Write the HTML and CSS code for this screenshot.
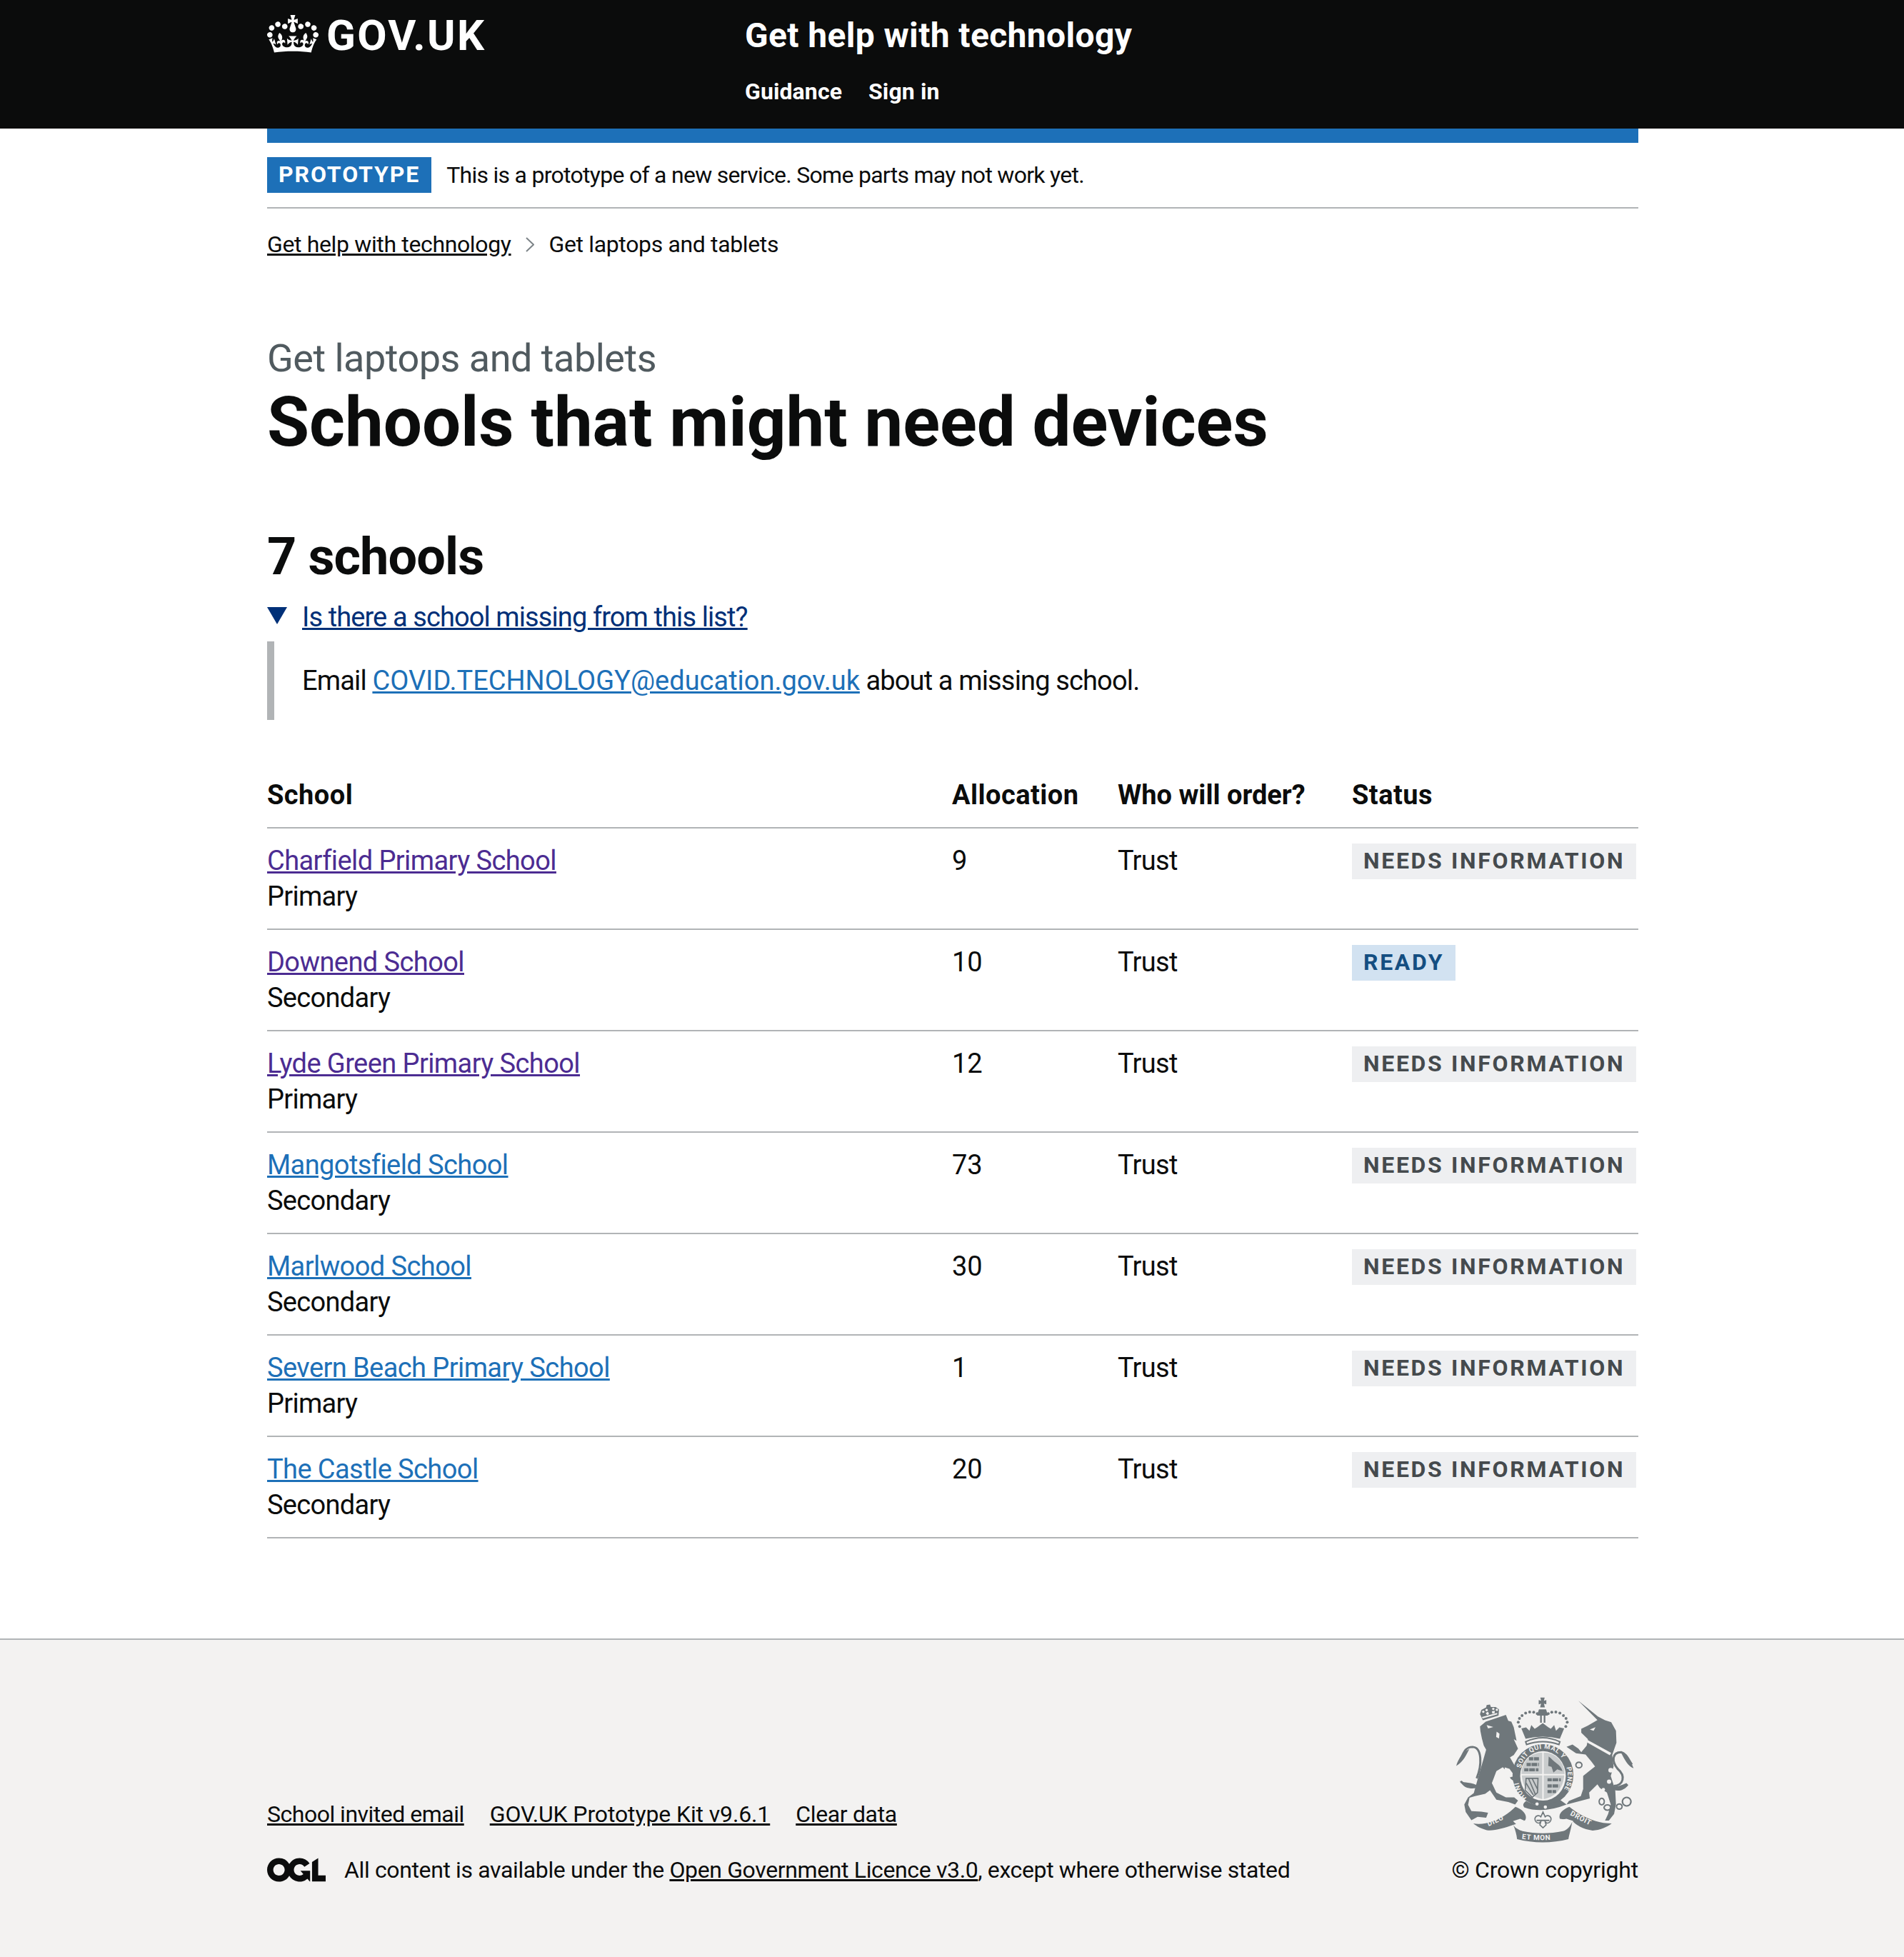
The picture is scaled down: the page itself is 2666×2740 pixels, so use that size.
FILE: index.html
```html
<!DOCTYPE html>
<html lang="en">
<head>
<meta charset="utf-8">
<title>Schools that might need devices</title>
<link rel="stylesheet" href="styles.css">
</head>
<body>
<header class="site-header">
  <div class="wrap header-inner">
    <a class="logo" href="#">
      <svg class="crown" viewBox="0 0 132 97" width="72" height="53"><path fill="currentColor" fill-rule="evenodd" d="M25 30.2c3.5 1.5 7.7-.2 9.1-3.7 1.5-3.6-.2-7.8-3.9-9.2-3.6-1.4-7.6.3-9.1 3.9-1.4 3.5.3 7.5 3.9 9zM9 39.5c3.6 1.5 7.8-.2 9.2-3.7 1.5-3.6-.2-7.8-3.9-9.1-3.6-1.5-7.6.2-9.1 3.8-1.4 3.5.3 7.5 3.8 9zM4.4 57.2c3.5 1.5 7.7-.2 9.1-3.8 1.5-3.6-.2-7.7-3.9-9.1-3.5-1.5-7.6.3-9.1 3.8-1.4 3.5.3 7.6 3.9 9.1zm38.3-21.4c3.5 1.5 7.7-.2 9.1-3.8 1.5-3.6-.2-7.7-3.9-9.1-3.6-1.5-7.6.3-9.1 3.8-1.3 3.6.4 7.7 3.9 9.1zm64.4-5.6c-3.6 1.5-7.8-.2-9.1-3.7-1.5-3.6.2-7.8 3.8-9.2 3.6-1.4 7.7.3 9.2 3.9 1.3 3.5-.4 7.5-3.9 9zm15.9 9.3c-3.6 1.5-7.7-.2-9.1-3.7-1.5-3.6.2-7.8 3.7-9.1 3.6-1.5 7.7.2 9.2 3.8 1.5 3.5-.3 7.5-3.8 9zm4.7 17.7c-3.6 1.5-7.8-.2-9.2-3.8-1.5-3.6.2-7.7 3.9-9.1 3.6-1.5 7.7.3 9.2 3.8 1.3 3.5-.4 7.6-3.9 9.1zM89.3 35.8c-3.6 1.5-7.8-.2-9.2-3.8-1.4-3.6.2-7.7 3.9-9.1 3.6-1.5 7.7.3 9.2 3.8 1.4 3.6-.3 7.7-3.9 9.1zM69.7 17.7l8.9 4.7V9.3l-8.9 2.8c-.2-.3-.5-.6-.9-.9L72.4 0H59.6l3.5 11.2c-.3.3-.6.5-.9.9l-8.8-2.8v13.1l8.8-4.7c.3.3.6.7.9.9l-5 15.4v.1c-.2.8-.4 1.6-.4 2.4 0 4.1 3.1 7.5 7 8.1h.2c.3 0 .7.1 1 .1.4 0 .7 0 1-.1h.2c4-.6 7.1-4.1 7.1-8.1 0-.8-.1-1.7-.4-2.4V34l-5.1-15.4c.4-.2.7-.6 1-.9zM66 92.8c16.9 0 32.8 1.1 47.1 3.2 4-16.9 8.9-26.7 14-33.5l-9.6-3.4c1 4.9 1.1 7.2 0 10.2-1.5-1.4-3-4.3-4.2-8.7L108.6 76c2.8-2 5-3.2 7.5-3.3-4.4 9.4-10 11.9-13.6 11.2-4.3-.8-6.3-4.6-5.6-7.9 1-4.7 5.7-5.9 8-.5 4.3-8.7-3-11.4-7.6-8.8 7.1-7.2 7.9-13.5 2.1-21.1-8 6.1-8.1 12.3-4.5 20.8-4.7-5.4-12.1-2.5-9.5 6.2 3.4-5.2 7.9-2 7.2 3.1-.6 4.3-6.4 7.8-13.5 7.2-10.3-.9-10.9-8-11.2-13.8 2.5-.5 7.1 1.8 11 7.3L80.2 60c-4.1 4.4-8 5.3-12.3 5.4 1.4-4.4 8-11.6 8-11.6H55.5s6.4 7.2 7.9 11.6c-4.2-.1-8-1-12.3-5.4l1.4 16.4c3.9-5.5 8.5-7.7 10.9-7.3-.3 5.8-.9 12.8-11.1 13.8-7.2.6-12.9-2.9-13.5-7.2-.7-5 3.8-8.3 7.1-3.1 2.7-8.7-4.6-11.6-9.4-6.2 3.7-8.5 3.6-14.7-4.6-20.8-5.8 7.6-5 13.9 2.2 21.1-4.7-2.6-11.9.1-7.7 8.8 2.3-5.5 7.1-4.2 8.1.5.7 3.3-1.3 7.1-5.7 7.9-3.5.7-9-1.8-13.5-11.2 2.5.1 4.7 1.3 7.5 3.3l-4.7-15.4c-1.2 4.4-2.7 7.2-4.3 8.7-1.1-3-.9-5.3 0-10.2l-9.5 3.4c5 6.9 9.9 16.7 14 33.5 14.8-2.1 30.8-3.2 47.7-3.2z"/></svg>
      <span class="logo-text">GOV.UK</span>
    </a>
    <div class="service">
      <a class="service-name" href="#">Get help with technology</a>
      <nav class="service-nav"><a href="#">Guidance</a><a href="#">Sign in</a></nav>
    </div>
  </div>
</header>
<div class="wrap">
  <div class="blue-bar"></div>
  <div class="phase">
    <strong class="phase-tag">Prototype</strong>
    <span class="phase-text">This is a prototype of a new service. Some parts may not work yet.</span>
  </div>
  <nav class="crumbs">
    <a href="#">Get help with technology</a>
    <svg class="crumb-sep" viewBox="0 0 12 21" width="12" height="21"><path d="M1 1l10 9.5L1 20" fill="none" stroke="#7d8488" stroke-width="2"/></svg>
    <span>Get laptops and tablets</span>
  </nav>
  <main class="main">
    <span class="caption">Get laptops and tablets</span>
    <h1 class="title">Schools that might need devices</h1>
    <h2 class="count">7 schools</h2>
    <div class="details">
      <div class="summary">
        <svg class="tri" viewBox="0 0 28 24" width="28" height="24"><path d="M0 0h28L14 24z" fill="#003078"/></svg>
        <a href="#">Is there a school missing from this list?</a>
      </div>
      <div class="details-body">Email <a class="link" href="#">COVID.TECHNOLOGY@education.gov.uk</a> about a missing school.</div>
    </div>
    <table class="schools">
      <thead>
        <tr><th class="c-school">School</th><th class="c-alloc">Allocation</th><th class="c-who">Who will order?</th><th class="c-status">Status</th></tr>
      </thead>
      <tbody>
        <tr><td><a class="visited" href="#">Charfield Primary School</a><br>Primary</td><td class="num">9</td><td>Trust</td><td><strong class="tag tag-grey">Needs information</strong></td></tr>
        <tr><td><a class="visited" href="#">Downend School</a><br>Secondary</td><td class="num">10</td><td>Trust</td><td><strong class="tag tag-blue">Ready</strong></td></tr>
        <tr><td><a class="visited" href="#">Lyde Green Primary School</a><br>Primary</td><td class="num">12</td><td>Trust</td><td><strong class="tag tag-grey">Needs information</strong></td></tr>
        <tr><td><a class="link" href="#">Mangotsfield School</a><br>Secondary</td><td class="num">73</td><td>Trust</td><td><strong class="tag tag-grey">Needs information</strong></td></tr>
        <tr><td><a class="link" href="#">Marlwood School</a><br>Secondary</td><td class="num">30</td><td>Trust</td><td><strong class="tag tag-grey">Needs information</strong></td></tr>
        <tr><td><a class="link" href="#">Severn Beach Primary School</a><br>Primary</td><td class="num">1</td><td>Trust</td><td><strong class="tag tag-grey">Needs information</strong></td></tr>
        <tr><td><a class="link" href="#">The Castle School</a><br>Secondary</td><td class="num">20</td><td>Trust</td><td><strong class="tag tag-grey">Needs information</strong></td></tr>
      </tbody>
    </table>
  </main>
</div>
<footer class="footer">
  <div class="wrap footer-inner">
    <div class="meta">
      <ul class="meta-links">
        <li class="m-invite"><a href="#">School invited email</a></li>
        <li class="m-kit"><a href="#">GOV.UK Prototype Kit v9.6.1</a></li>
        <li class="m-clear"><a href="#">Clear data</a></li>
      </ul>
      <div class="licence">
        <svg class="ogl" viewBox="0 0 483.2 195.7" width="82" height="34"><path fill="currentColor" d="M421.5 142.8V.1l-50.7 32.3v161.1h112.4v-50.7zm-122.3-9.6A47.12 47.12 0 0 1 221 97.8c0-26 21.1-47.1 47.1-47.1 16.7 0 31.4 8.7 39.7 21.8l42.7-27.2A97.63 97.63 0 0 0 268.1 0c-36.5 0-68.3 20.1-85.1 49.7A98 98 0 0 0 97.8 0C43.9 0 0 43.9 0 97.8s43.9 97.8 97.8 97.8c36.5 0 68.3-20.1 85.1-49.7a97.76 97.76 0 0 0 149.6 25.4l19.4 22.2h3v-87.8h-80l24.3 27.5zM97.8 145c-26 0-47.1-21.1-47.1-47.1s21.1-47.1 47.1-47.1 47.2 21 47.2 47S123.8 145 97.8 145"/></svg>
        <span>All content is available under the <a href="#">Open Government Licence v3.0</a>, except where otherwise stated</span>
      </div>
    </div>
    <div class="copyright">
      <svg class="crest" viewBox="170 100 760 620" width="253" height="207">
        <defs>
          <path id="ring-top" d="M448 408A98 102 0 0 1 638 398"/>
          <path id="ring-right" d="M640 404A104 110 0 0 1 604 526"/>
          <path id="ring-left" d="M472 532A106 110 0 0 1 438 440"/>
          <path id="rib-l" d="M312 652Q365 630 418 598"/>
          <path id="rib-m" d="M452 704Q540 716 628 702"/>
          <path id="rib-r" d="M654 604Q710 635 772 664"/>
        </defs>
        <g class="crest-ink">
          <path d="M276 232L300 212 385 183 395 208 408 212 418 235 430 292 418 285 436 325 418 352 402 362 440 428 447 456 425 466 405 452 392 425 372 403 345 420 326 470 345 510 385 530 420 530 436 544 424 560 395 550 345 540 318 500 298 515 255 525 232 532 226 562 240 588 282 590 310 595 302 616 266 612 240 626 216 592 210 560 226 530 250 512 270 440 290 372 302 330 292 312 284 282 278 252Z"/>
          <path class="crest-line" d="M262 450C285 395 285 320 245 318 212 318 208 345 190 378"/>
          <path class="crest-line" d="M258 484C230 484 205 475 195 462"/>
          <path d="M176 398C184 368 205 340 232 326 218 350 208 380 176 398ZM192 460C200 470 225 462 262 478L256 492C230 494 205 490 192 460Z"/>
          <path d="M288 206L354 186 356 160 342 150 322 150 318 140 304 142 302 152 282 162 276 180Z"/>
          <g class="crest-cut">
            <circle cx="290" cy="170" r="5"/><circle cx="304" cy="163" r="5"/><circle cx="332" cy="158" r="5"/><circle cx="347" cy="162" r="5"/>
            <path d="M284 192l64-17 1 6-62 17z"/><path d="M300 176l10-6 4 10-8 4zM326 168l12-2 0 10-10 2z"/>
            <path d="M304 226l28 8-22 6z"/><path d="M346 254l12 8-2 20-12-6z"/><path d="M380 404l20 6 22 30-20 6-22-20z"/>
          </g>
          <path d="M690 124L772 190 802 206 828 214 848 250 850 300 832 352 838 400 826 440 845 500 848 560 840 600 818 628 802 628 815 600 826 560 810 510 780 490 770 475 735 510 738 535 672 552 640 560 650 545 700 525 710 495 710 440 735 420 760 400 745 380 720 350 680 345 640 318 665 308 690 325 702 340 725 312 730 285 702 258 702 242 730 228 770 205Z"/>
          <path class="crest-line" d="M838 482C880 480 890 440 855 410 830 380 830 340 870 340 890 345 900 370 915 392"/>
          <path d="M922 408C900 400 885 375 868 338 895 345 910 375 922 408ZM838 498C860 508 885 498 900 478L892 470C870 480 855 485 836 484Z"/>
          <g class="crest-cut">
            <circle cx="705" cy="308" r="9"/><circle cx="826" cy="416" r="10"/><circle cx="819" cy="464" r="9"/><circle cx="795" cy="497" r="7"/>
            <path d="M728 288l100 55-6 10-96-54z"/><path d="M738 245l24-10-8 15z"/>
          </g>
          <path class="crest-thin" d="M788 534a11 14 0 1 0 .1 0zM812 562a14 11 0 1 0 .1 0zM862 558a12 11 0 1 0 .1 0zM893 530a18 18 0 1 0 .1 0zM692 382a13 12 0 1 0 .1 0z"/>
          <path d="M530 110h18l-3 14 10-3v18l-10-3 4 16h-20l4-16-10 3v-18l10 3z"/>
          <path d="M524 160h30l8 26h-46z"/>
          <path d="M529 186h7v30h-7zM544 186h7v30h-7z"/>
          <path d="M450 240L470 236 484 250 492 226 506 242 516 236 540 218 564 236 574 242 588 226 596 250 610 236 630 240 612 284Q540 266 468 284Z"/>
          <g>
            <circle cx="443" cy="232" r="6"/><circle cx="437" cy="214" r="6"/><circle cx="442" cy="198" r="6"/><circle cx="453" cy="186" r="6"/><circle cx="468" cy="176" r="6"/><circle cx="485" cy="171" r="6"/><circle cx="502" cy="172" r="6"/><circle cx="517" cy="178" r="6"/>
            <circle cx="563" cy="178" r="6"/><circle cx="578" cy="172" r="6"/><circle cx="595" cy="171" r="6"/><circle cx="612" cy="176" r="6"/><circle cx="627" cy="186" r="6"/><circle cx="638" cy="198" r="6"/><circle cx="643" cy="214" r="6"/><circle cx="637" cy="232" r="6"/>
          </g>
          <path class="crest-thin" d="M468 296Q540 262 612 296L608 308Q540 284 472 308Z"/>
          <ellipse cx="541" cy="436" rx="128" ry="130"/>
          <path d="M470 545Q540 585 612 540L640 560Q540 600 462 572 450 560 470 545Z"/>
          <ellipse class="crest-cut" cx="541" cy="440" rx="96" ry="104"/>
          <path d="M538 342v90h-88c0-50 40-90 88-90Z" class="crest-quarter"/>
          <path d="M544 342v90h88c0-50-40-90-88-90Z" class="crest-quarter"/>
          <path d="M538 438v100c-50-10-84-50-86-100Z" class="crest-quarter"/>
          <path d="M544 438v100c50-10 84-50 86-100Z" class="crest-quarter"/>
          <g class="crest-lions">
            <path d="M482 368h42M472 392h52M462 414h60"/>
            <path d="M560 456h56M560 482h50M560 506h36"/>
          </g>
          <path d="M565 358c12 8 20 20 32 28 12 8 22 18 26 34l-22-8-16 14-8-24-14-4z"/>
          <path class="crest-hatch" d="M470 450l50 0-2 60-22 20-30-30zM480 450l30 70M470 470l30 50M495 450l25 50"/>
          <text class="crest-text crest-ring"><textPath href="#ring-top">SOIT QUI MAL Y</textPath></text>
          <text class="crest-text crest-ring"><textPath href="#ring-right">PENSE</textPath></text>
          <text class="crest-text crest-ring"><textPath href="#ring-left">HONI</textPath></text>
          <circle class="crest-cut" cx="516" cy="558" r="7"/><circle class="crest-cut" cx="551" cy="571" r="7"/>
          <path d="M248 640C310 650 380 615 425 570 455 580 478 605 466 626L436 640 416 646C375 660 335 672 305 668 280 662 262 652 248 640Z"/>
          <path d="M612 620C604 600 625 580 652 570 700 610 765 640 830 640 810 656 780 668 750 670 710 664 680 648 664 628Z"/>
          <path d="M416 646C425 660 440 668 455 672 510 684 570 684 625 672 640 668 655 655 664 632 660 660 650 690 648 706 580 724 500 724 432 706 430 688 425 668 416 646Z"/>
          <path class="crest-cut" d="M415 630L445 620 462 628 436 650ZM668 630L640 620 618 624 644 650Z"/>
          <path class="crest-thin crest-fleur" d="M541 592l9 20c6-8 20-6 24 4 4 14-8 24-18 22l-6-6 4 14-13 12-13-12 4-14-6 6c-10 2-22-8-18-22 4-10 18-12 24-4z"/>
          <path d="M514 624h54v6h-54z"/>
          <text class="crest-text crest-motto"><textPath href="#rib-l">DIEU</textPath></text>
          <text class="crest-text crest-motto"><textPath href="#rib-m">ET MON</textPath></text>
          <text class="crest-text crest-motto"><textPath href="#rib-r">DROIT</textPath></text>
        </g>
      </svg>
      <a class="copy-link" href="#">© Crown copyright</a>
    </div>
  </div>
</footer>
</body>
</html>
```
FILE: styles.css
```css
* { box-sizing: border-box; }
html, body { margin: 0; padding: 0; }
body {
  font-family: Roboto, "Noto Sans", "Liberation Sans", sans-serif;
  font-size: 38px;
  line-height: 50px;
  color: #0b0c0c;
  background: #fff;
  min-height: 2740px;
  display: flex;
  flex-direction: column;
}
a { color: inherit; }
.wrap { width: 1920px; margin-left: 374px; }

.site-header { background: #0b0c0c; color: #fff; height: 180px; }
.site-header a { color: #fff; text-decoration: none; }
.header-inner { display: flex; padding-top: 20px; }
.logo { width: 669px; display: flex; align-items: flex-start; }
.crown { margin-top: 1px; }
.logo-text { font-size: 60px; font-weight: 700; line-height: 60px; margin: 0 0 0 11px; letter-spacing: 2.3px; }
.service-name { display: block; font-size: 48px; font-weight: 700; line-height: 60px; letter-spacing: 0.36px; }
.service-nav { display: flex; gap: 37px; margin-top: 28px; font-size: 32px; font-weight: 700; line-height: 40px; letter-spacing: 0.1px; }

.blue-bar { height: 20px; background: #1d70b8; }
.phase { display: flex; align-items: center; gap: 21px; padding: 20px 0; border-bottom: 2px solid #b1b4b6; height: 92px; font-size: 32px; line-height: 40px; }
.phase-tag { display: block; background: #1d70b8; color: #fff; height: 50px; line-height: 48px; padding: 0 16px; text-transform: uppercase; letter-spacing: 1.9px; font-weight: 700; white-space: nowrap; }
.phase-text { letter-spacing: -0.72px; }

.crumbs { display: flex; align-items: center; margin-top: 30px; font-size: 32px; line-height: 40px; letter-spacing: -0.36px; }
.crumb-sep { margin: 0 21px 0 20px; }

.main { padding-top: 110px; }
.caption { display: block; font-size: 54px; line-height: 60px; color: #505a5f; letter-spacing: -0.5px; }
.title { margin: 9px 0 0; font-size: 96px; line-height: 100px; font-weight: 700; letter-spacing: -0.05px; }
.count { margin: 99px 0 0; font-size: 72px; line-height: 80px; font-weight: 700; letter-spacing: -0.9px; }
.details { margin-top: 19px; }
.summary { display: flex; align-items: center; gap: 21px; color: #003078; height: 50px; letter-spacing: -0.9px; }
.summary a { color: #003078; }
.tri { flex: none; margin-top: -4px; }
.details-body { margin-top: 9px; height: 110px; border-left: 10px solid #b1b4b6; padding: 30px 0 30px 39px; letter-spacing: -0.85px; }
.link { color: #1d70b8; }
.details-body .link { letter-spacing: 0; }
.visited { color: #4c2c92; }

.schools { margin-top: 60px; width: 1920px; table-layout: fixed; border-collapse: collapse; }
.schools th, .schools td { text-align: left; vertical-align: top; padding: 20px 40px 20px 0; border-bottom: 2px solid #b1b4b6; letter-spacing: -0.7px; }
.schools th { font-weight: 700; letter-spacing: 0.45px; }
.schools td a { letter-spacing: -0.58px; }
.schools .num { letter-spacing: 0; }
.schools .c-who { letter-spacing: 0; }
.schools td:last-child, .schools th:last-child { padding-right: 0; }
.c-school { width: 959px; }
.c-alloc { width: 232px; }
.c-who { width: 328px; }
.c-status { width: 401px; }
.schools .tag { display: inline-block; height: 50px; line-height: 48px; margin-top: 1px; padding: 0 16px; vertical-align: top; font-size: 32px; font-weight: 700; letter-spacing: 2.67px; text-transform: uppercase; white-space: nowrap; }
.tag-grey { background: #eeeff1; color: #454a4d; }
.tag-blue { background: #d2e2f1; color: #144e81; }

.footer { margin-top: auto; background: #f3f2f1; border-top: 2px solid #b1b4b6; height: 446px; font-size: 32px; line-height: 40px; }
.footer-inner { display: flex; justify-content: space-between; align-items: flex-end; height: 100%; padding-bottom: 102px; }
.meta-links { list-style: none; margin: 0 0 38px; padding: 0; display: flex; gap: 36px; }
.m-invite { letter-spacing: -0.5px; }
.m-kit { letter-spacing: -0.13px; }
.m-clear { letter-spacing: -0.35px; }
.licence { display: flex; align-items: center; gap: 26px; letter-spacing: -0.37px; }
.ogl { display: block; flex: none; }
.copyright { display: flex; flex-direction: column; align-items: flex-end; letter-spacing: -0.2px; }
.crest { display: block; margin: 0 4px 18px 0; }
.copy-link { text-decoration: none; }

.crest-ink { fill: #6f777b; }
.crest-line { fill: none; stroke: #6f777b; stroke-width: 9; }
.crest-thin { fill: none; stroke: #6f777b; stroke-width: 6; }
.crest-fleur { fill: #f3f2f1; stroke-width: 5; }
.crest-cut { fill: #f3f2f1; }
.crest-quarter { fill: #c9cccd; }
.crest-lions { fill: none; stroke: #6f777b; stroke-width: 13; stroke-dasharray: 18 3 24 4; }
.crest-hatch { fill: none; stroke: #6f777b; stroke-width: 5; }
.crest-text { fill: #f3f2f1; font-family: Roboto, sans-serif; font-weight: 700; letter-spacing: 2px; }
.crest-ring { font-size: 28px; }
.crest-motto { font-size: 30px; }
```
